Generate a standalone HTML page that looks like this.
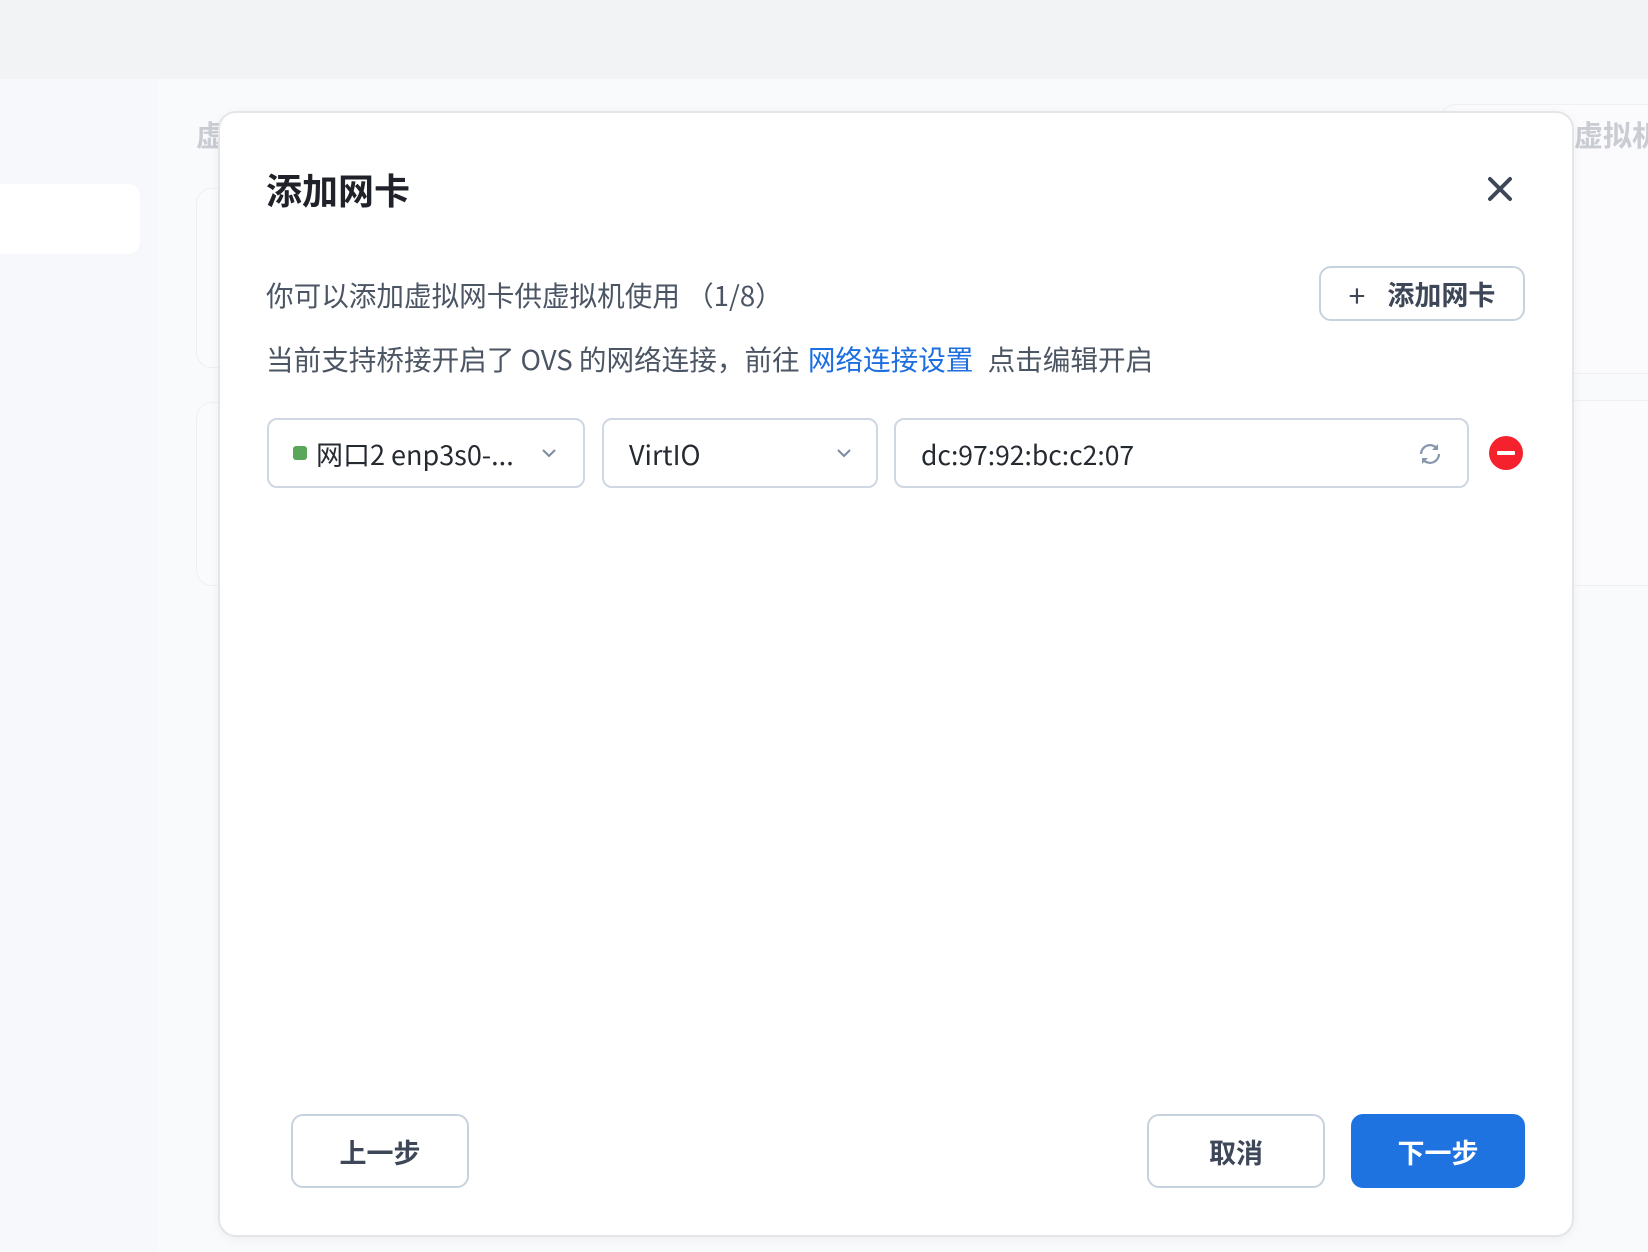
<!DOCTYPE html>
<html><head><meta charset="utf-8"><style>
*{box-sizing:border-box;margin:0;padding:0}
body{width:1648px;height:1252px;overflow:hidden;background:#f9fafc;font-family:"Noto Sans CJK SC","Liberation Sans",sans-serif;position:relative}
.top{position:absolute;left:0;top:0;width:1648px;height:79px;background:#f2f3f5}
.leftpane{position:absolute;left:0;top:79px;width:158px;height:1173px;background:#f7f8fb}
.lp1{position:absolute;left:0;top:105px;width:140px;height:70px;background:#fff;border-radius:0 12px 12px 0}
.main{position:absolute;left:158px;top:79px;width:1490px;height:1173px;background:#f9fafc;border-radius:20px 0 0 0}
.card{position:absolute;border:1px solid #eef0f4;border-radius:16px;background:#fafbfd}
.ghost{position:absolute;color:#c9ccd2;font-weight:bold;font-size:29px;white-space:nowrap;line-height:1}
.modal{position:absolute;left:218px;top:111px;width:1356px;height:1126px;background:#fff;border:2px solid #e3e5e9;border-radius:18px;box-shadow:0 2px 10px rgba(0,0,0,.05)}
.title{position:absolute;left:266px;top:164px;font-size:36px;font-weight:bold;color:#1f2329;line-height:50px}
.t{position:absolute;font-size:27.6px;color:#4b5563;white-space:nowrap;line-height:36px}
.btn{position:absolute;border:2px solid #c8d2de;border-radius:12px;background:#fff;color:#3d4757;font-weight:bold;font-size:27px;display:flex;align-items:center;justify-content:center}
.sel{position:absolute;top:418px;height:70px;border:2px solid #cfd7e2;border-radius:10px;background:#fff;font-size:27px;color:#252a31;display:flex;align-items:center}
</style></head><body>
<div class="top"></div>
<div class="leftpane"><div class="lp1"></div></div>
<div class="main"></div>
<div class="card" style="left:196px;top:188px;width:40px;height:180px"></div>
<div class="card" style="left:196px;top:402px;width:40px;height:184px"></div>
<div class="card" style="left:1440px;top:104px;width:260px;height:270px;background:#fbfbfd"></div>
<div class="card" style="left:1540px;top:400px;width:200px;height:186px;background:#fbfbfd"></div>
<div class="ghost" style="left:196px;top:120px">虚</div>
<div class="ghost" style="left:1574px;top:120px">虚拟机</div>
<div class="modal"></div>
<div class="title">添加网卡</div>
<svg style="position:absolute;left:1487px;top:176px" width="26" height="26" viewBox="0 0 26 26"><path d="M3 3L23 23M23 3L3 23" stroke="#3d4757" stroke-width="4" stroke-linecap="round"/></svg>
<div class="t" style="left:266px;top:276px">你可以添加虚拟网卡供虚拟机使用 （1/8）</div>
<div class="btn" style="left:1319px;top:266px;width:206px;height:55px"><span style="font-weight:normal;font-size:30px;margin-right:22px">+</span>添加网卡</div>
<div class="t" style="left:266px;top:340px">当前支持桥接开启了 OVS 的网络连接，前往 <span style="color:#1d6fe0;margin:0 8px 0 2px">网络连接设置</span> 点击编辑开启</div>
<div class="sel" style="left:267px;width:318px;padding-left:24px"><span style="width:14px;height:14px;background:#5aa65a;border-radius:3px;margin-right:9px"></span>网口2 enp3s0-...
<svg style="position:absolute;right:26px;top:27px" width="16" height="12" viewBox="0 0 16 12"><path d="M2 3L8 9L14 3" fill="none" stroke="#7a8aa0" stroke-width="2"/></svg></div>
<div class="sel" style="left:602px;width:276px;padding-left:25px">VirtIO
<svg style="position:absolute;right:24px;top:27px" width="16" height="12" viewBox="0 0 16 12"><path d="M2 3L8 9L14 3" fill="none" stroke="#7a8aa0" stroke-width="2"/></svg></div>
<div class="sel" style="left:894px;width:575px;padding-left:25px;font-size:26.5px">dc:97:92:bc:c2:07
<svg style="position:absolute;right:24px;top:21px" width="26" height="26" viewBox="0 0 26 26"><path d="M4 13A9 9 0 0 1 20 7.5M22 13A9 9 0 0 1 6 18.5" fill="none" stroke="#8797ad" stroke-width="2.2"/><path d="M21 3L21 9L15 9Z M5 23L5 17L11 17Z" fill="#8797ad"/></svg></div>
<div style="position:absolute;left:1489px;top:436px;width:34px;height:34px;border-radius:50%;background:#f5222d"><div style="position:absolute;left:8px;top:15px;width:18px;height:4px;background:#fff;border-radius:1px"></div></div>
<div class="btn" style="left:291px;top:1114px;width:178px;height:74px">上一步</div>
<div class="btn" style="left:1147px;top:1114px;width:178px;height:74px">取消</div>
<div class="btn" style="left:1351px;top:1114px;width:174px;height:74px;background:#1f73e0;border-color:#1f73e0;color:#fff">下一步</div>
</body></html>
